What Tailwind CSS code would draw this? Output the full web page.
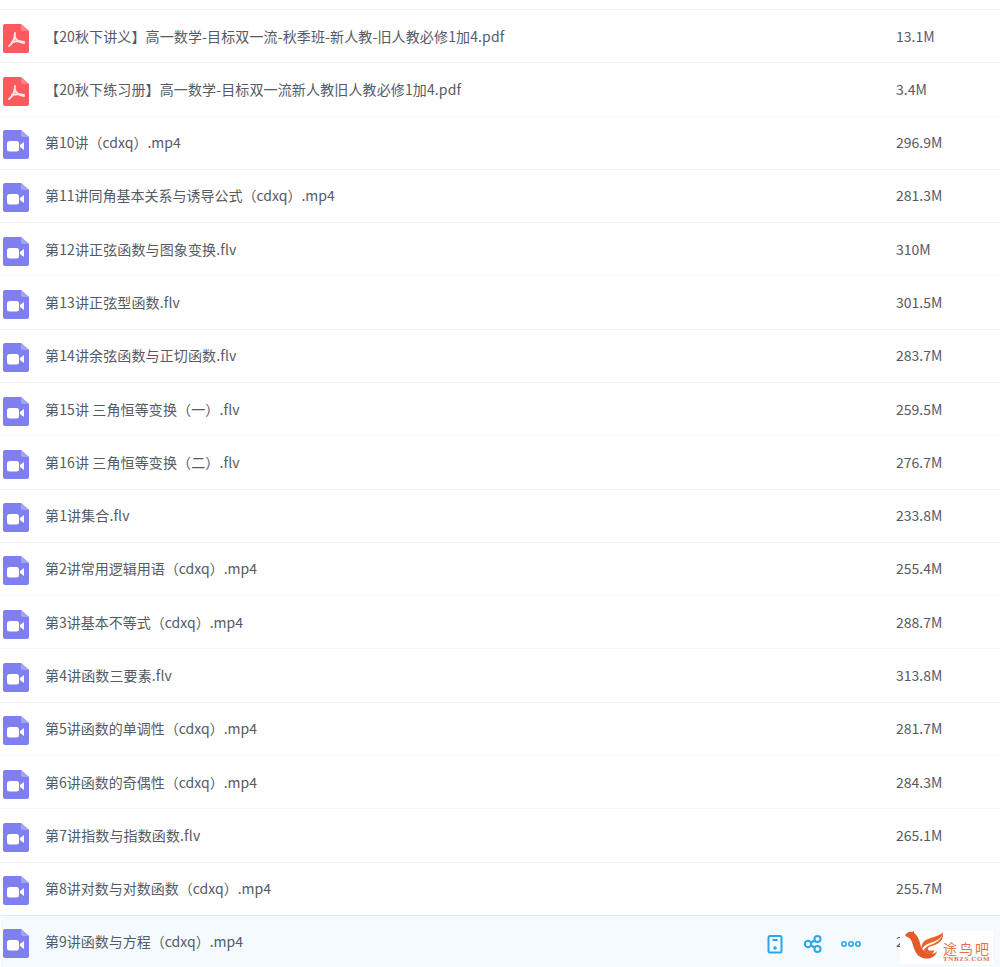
<!DOCTYPE html>
<html lang="en">

<head>
    <meta charset="UTF-8">
    <title>文件列表</title>
    <script src="https://cdn.jsdelivr.net/npm/@tailwindcss/browser@4"></script>
</head>

<body class="bg-white overflow-hidden font-['Noto_Sans_CJK_SC','Noto_Sans',sans-serif] text-[14px] text-[#555a64]">

    <div class="relative w-[1000px] h-[967px] overflow-hidden pt-[9px]">
        <div id="list" class="border-t border-[#f4f5f6]"></div>

        <!-- watermark -->
        <div class="absolute left-[900px] top-[931px] w-[93px] h-[33px] bg-white flex items-start pl-[5px]">
            <svg width="38" height="31" viewBox="0 0 38 31" class="shrink-0">
                <path d="M0 5c1-3 4-5 7-4l2-1 0 2c3 2 5 6 6 10 1 5 3 8 7 10 4 2 8 1 10-2-1 6-8 9-14 7C11 25 9 18 7 11 6 8 4 6 0 5z" fill="#e2592a" />
                <path d="M38 1c-1 8-7 11-13 13-4 2-7 4-6 7 1 3 5 4 8 2 1-1 2-2 2-4-3 1-6 1-6-1 0-3 5-3 9-5 5-3 7-7 6-12z" fill="#e8642c" />
                <path d="M38 1C33 6 26 6 21 9c-4 2-5 6-4 11 0-4 3-6 8-8 6-2 12-4 13-11z" fill="#e8642c" />
            </svg>
            <div class="flex flex-col items-center pt-[10px] text-[#df7350]">
                <span class="w-[47px] text-[14px] tracking-[2px] leading-[14px] whitespace-nowrap">途鸟吧</span>
                <span class="w-[47px] text-[7px] tracking-[0.600px] font-['Liberation_Serif',serif] font-bold leading-[8px] whitespace-nowrap">TNBZS.COM</span>
            </div>
        </div>
    </div>

    <script>
        const pdfIcon = `
            <svg width="26" height="29" viewBox="0 0 26 29" class="shrink-0 mt-[4px]">
                <path d="M2 0h16l8 7v20a2 2 0 0 1-2 2H2a2 2 0 0 1-2-2V2a2 2 0 0 1 2-2z" fill="#fc5a5e" />
                <path d="M18 0l8 7h-6a2 2 0 0 1-2-2z" fill="#fd8386" />
                <g fill="none" stroke="#ffe3e3" stroke-width="2" stroke-linecap="round">
                    <path d="M12 9c0 5-2 10-6 13" />
                    <path d="M12 13c1 3 4 5 9 6" />
                    <path d="M9 18c4-1 8-1 12 0" />
                </g>
            </svg>`;
        const videoIcon = `
            <svg width="26" height="29" viewBox="0 0 26 29" class="shrink-0 mt-[4px]">
                <path d="M2 0h16l8 7v20a2 2 0 0 1-2 2H2a2 2 0 0 1-2-2V2a2 2 0 0 1 2-2z" fill="#7f7ff0" />
                <path d="M18 0l8 7h-6a2 2 0 0 1-2-2z" fill="#a3a3f6" />
                <rect x="4" y="11" width="12" height="10.500" rx="2.500" fill="#fff" />
                <path d="M17 15l4-3v8l-4-3z" fill="#fff" />
            </svg>`;

        const files = [
            ['pdf', '【20秋下讲义】高一数学-目标双一流-秋季班-新人教-旧人教必修1加4.pdf', '13.1M'],
            ['pdf', '【20秋下练习册】高一数学-目标双一流新人教旧人教必修1加4.pdf', '3.4M'],
            ['video', '第10讲（cdxq）.mp4', '296.9M'],
            ['video', '第11讲同角基本关系与诱导公式（cdxq）.mp4', '281.3M'],
            ['video', '第12讲正弦函数与图象变换.flv', '310M'],
            ['video', '第13讲正弦型函数.flv', '301.5M'],
            ['video', '第14讲余弦函数与正切函数.flv', '283.7M'],
            ['video', '第15讲 三角恒等变换（一）.flv', '259.5M'],
            ['video', '第16讲 三角恒等变换（二）.flv', '276.7M'],
            ['video', '第1讲集合.flv', '233.8M'],
            ['video', '第2讲常用逻辑用语（cdxq）.mp4', '255.4M'],
            ['video', '第3讲基本不等式（cdxq）.mp4', '288.7M'],
            ['video', '第4讲函数三要素.flv', '313.8M'],
            ['video', '第5讲函数的单调性（cdxq）.mp4', '281.7M'],
            ['video', '第6讲函数的奇偶性（cdxq）.mp4', '284.3M'],
            ['video', '第7讲指数与指数函数.flv', '265.1M'],
            ['video', '第8讲对数与对数函数（cdxq）.mp4', '255.7M'],
        ];

        let html = '';
        files.forEach(([type, name, size]) => {
            // mp4 names already run the right width, pdf and flv ones come out a bit short
            const spacing = name.endsWith('.mp4') ? '' : 'tracking-[0.130px]';
            html += `
                <div class="h-[53.290px] border-b border-[#f4f5f6] flex items-center pl-[3px]">
                    ${type === 'pdf' ? pdfIcon : videoIcon}
                    <span class="ml-[16px] flex-1 whitespace-nowrap ${spacing}">${name}</span>
                    <span class="w-[104px] whitespace-nowrap">${size}</span>
                </div>`;
        });

        // hovered row with action icons
        html += `
            <div class="h-[53px] ml-[1px] border-t border-[#dcebf5] bg-[#f4fafe] flex items-center pl-[2px] -mt-px">
                ${videoIcon}
                <span class="ml-[16px] flex-1 whitespace-nowrap">第9讲函数与方程（cdxq）.mp4</span>
                <div class="flex items-center gap-[18px] text-[#2aa5f0] mr-[35px] pt-[5px]">
                    <svg width="20" height="20" viewBox="0 0 20 20" fill="none" stroke="currentColor" stroke-width="2">
                        <rect x="3.500" y="2" width="13" height="16.500" rx="1.500" />
                        <path d="M7.500 6h5" />
                        <circle cx="10" cy="14" r="0.800" />
                    </svg>
                    <svg width="20" height="20" viewBox="0 0 20 20" fill="none" stroke="currentColor" stroke-width="2">
                        <circle cx="5" cy="10" r="3.200" />
                        <circle cx="14.500" cy="5" r="3" />
                        <circle cx="14.500" cy="15" r="3" />
                        <path d="M8 8.500l4-2M8 11.500l4 2" />
                    </svg>
                    <svg width="20" height="20" viewBox="0 0 20 20" fill="none" stroke="currentColor" stroke-width="1.600">
                        <circle cx="3" cy="10" r="2.200" />
                        <circle cx="10" cy="10" r="2.200" />
                        <circle cx="17" cy="10" r="2.200" />
                    </svg>
                </div>
                <span class="w-[104px] whitespace-nowrap">2</span>
            </div>`;

        document.getElementById('list').innerHTML = html;
    </script>

</body>

</html>
